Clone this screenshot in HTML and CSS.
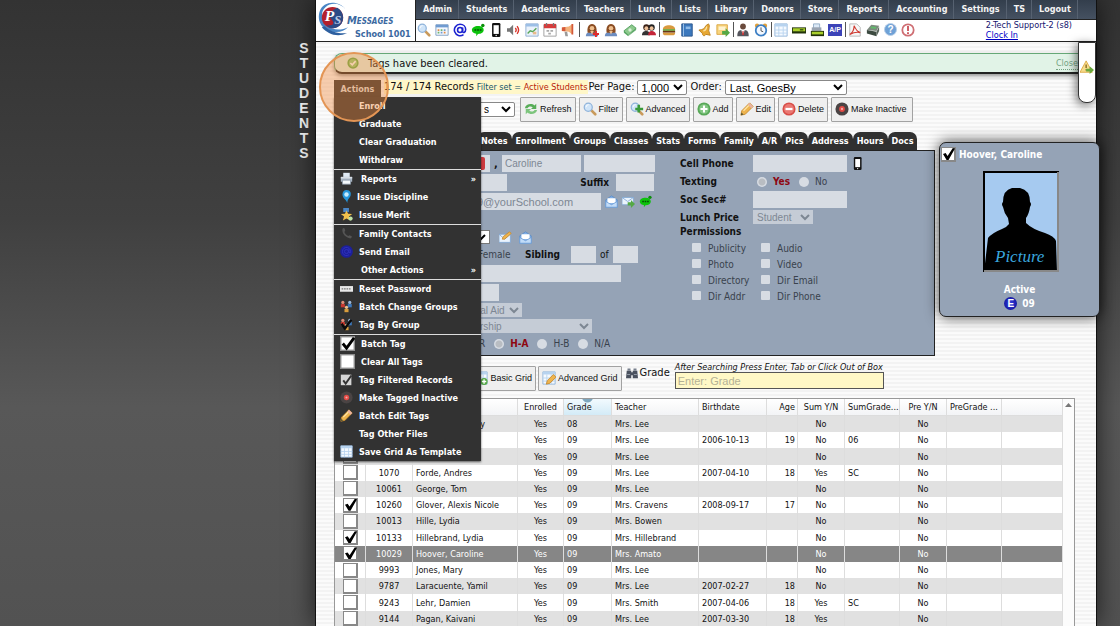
FILE: index.html
```html
<!DOCTYPE html>
<html lang="en">
<head>
<meta charset="utf-8">
<title>Messages - Students</title>
<link rel="stylesheet" href="styles.css">
</head>
<body>
<svg class="sprite" aria-hidden="true">
  <symbol id="i-search" viewBox="0 0 16 16"><path d="M9 9l5 5" stroke="#c99a5b" stroke-width="3" stroke-linecap="round"/><circle cx="6" cy="6" r="4.6" fill="#cfe4f8" stroke="#8fb3da" stroke-width="1.4"/><path d="M3.5 6a3 3 0 0 1 3-3" stroke="#fff" fill="none"/></symbol>
  <symbol id="i-calendar" viewBox="0 0 16 16"><path d="M1 2h14v12H1z" fill="#f4f8fd" stroke="#7e9cc0"/><path d="M1 2h14v3H1z" fill="#6f9bd1"/><path d="M3 7h2v2H3zM10 10h2v2h-2z" fill="#e08a4a"/><path d="M6.500 7h2v2h-2zM3 10h2v2H3z" fill="#6db46d"/><path d="M10 7h2v2h-2zM6.500 10h2v2h-2z" fill="#6f9bd1"/></symbol>
  <symbol id="i-at" viewBox="0 0 16 16"><circle cx="8" cy="8" r="2.800" fill="none" stroke="#1b22d0" stroke-width="1.800"/><path d="M11 5v4.500c0 2.500 3.500 1.500 3.500-2C14.500 4 11.800 1.500 8 1.500A6.500 6.500 0 1 0 12 13.200" fill="none" stroke="#1b22d0" stroke-width="1.800"/></symbol>
  <symbol id="i-chat" viewBox="0 0 16 16"><path d="M8 3.500c4 0 6.500 1.800 6.500 4.500S12 12.500 8 12.500L6 15v-2.700C3 12 1 10.500 1 8s3-4.500 7-4.500z" fill="#0cc20c"/><circle cx="13.500" cy="2.800" r="2" fill="#0a8f0a"/><path d="M4 8h2M7 8h2M10 8h2" stroke="#064d06" stroke-width="1.600"/></symbol>
  <symbol id="i-phone" viewBox="0 0 16 16"><rect x="3.500" y="0" width="9.500" height="16" rx="1.500" fill="#111"/><path d="M5.200 2.500h6v10h-6z" fill="#fff"/><circle cx="8.200" cy="14.200" r=".8" fill="#fff"/></symbol>
  <symbol id="i-sound" viewBox="0 0 16 16"><path d="M0 6h3l4-4v12l-4-4H0z" fill="#777"/><path d="M9.500 5.500q2 2.500 0 5M11.500 3.500q3.500 4.500 0 9" fill="none" stroke="#d8342a" stroke-width="1.600"/></symbol>
  <symbol id="i-chart" viewBox="0 0 16 16"><path d="M1 1h14v14H1z" fill="#eaf2fb" stroke="#8aa9cf"/><path d="M1 1h14v3H1z" fill="#9cbfe6"/><path d="M3 12l3-3 3 1 4-4" stroke="#57a657" stroke-width="1.600" fill="none"/><path d="M9 10h4v3H9z" fill="#e8b98b"/></symbol>
  <symbol id="i-date" viewBox="0 0 16 16"><path d="M1 2h14v13H1z" fill="#fff" stroke="#999"/><path d="M1 1h14v5H1z" fill="#d63c3c"/><path d="M4 0v3M12 0v3" stroke="#777" stroke-width="1.500"/><path d="M4 8h3v2H4zM8.500 8h3v2h-3zM6 11h3v2H6z" fill="#aaa"/></symbol>
  <symbol id="i-horn" viewBox="0 0 16 16"><path d="M1 5l8-1 4-3v12l-4-3-8-1z" fill="#f3b27c"/><path d="M1 5l4-.5v5L1 9zM12 1h2v12h-2z" fill="#d4593a"/><path d="M4 10l1 5h3l-1-5z" fill="#9a9a9a"/></symbol>
  <symbol id="i-person" viewBox="0 0 16 16"><path d="M1 15c0-4 3-5 7-5s7 1 7 5z" fill="#6d8dc0"/><path d="M3 11c-1-6 1-10 5-10s6 4 5 10z" fill="#8a4c22"/><circle cx="8" cy="6" r="2.600" fill="#efc08f"/><path d="M6 9h4l-2 4z" fill="#efc08f"/></symbol>
  <symbol id="i-person-add" viewBox="0 0 16 16"><use href="#i-person"/><path d="M12.500 9v7M9 12.500h7" stroke="#e02a2a" stroke-width="2.200"/></symbol>
  <symbol id="i-money" viewBox="0 0 16 16"><path d="M1 9l9-7 5 4-9 8z" fill="#8cc98c" stroke="#4e9a5a"/><path d="M1 9v2l5 4v-2zM6 15l9-7V6" fill="#5aa765"/><circle cx="8" cy="8" r="1.900" fill="#d8f0d8"/></symbol>
  <symbol id="i-group" viewBox="0 0 16 16"><circle cx="5" cy="5" r="3.600" fill="#3a2218"/><circle cx="11" cy="5" r="3.600" fill="#222"/><circle cx="5" cy="6" r="2.200" fill="#eec29b"/><circle cx="11" cy="6" r="2.200" fill="#eec29b"/><path d="M0 14c0-4 2-5 5-5s4 2 4 5z" fill="#333"/><path d="M7 14c0-4 2-5 4-5s5 1 5 5z" fill="#c42438"/></symbol>
  <symbol id="i-burger" viewBox="0 0 16 16"><path d="M1 7c0-6 14-6 14 0z" fill="#d99a3e"/><path d="M1 7h14v2H1z" fill="#6aa53b"/><path d="M1 9h14v2H1z" fill="#6a3515"/><path d="M1 11h14q0 3-3 3H4q-3 0-3-3z" fill="#d99a3e"/></symbol>
  <symbol id="i-book" viewBox="0 0 16 16"><path d="M2 1h12v14H2z" fill="#3b78bd" stroke="#2a558c"/><path d="M4 1v14" stroke="#a7c9ec"/><path d="M6.500 4h5.500v3H6.500z" fill="#8fbbe8"/></symbol>
  <symbol id="i-bell" viewBox="0 0 16 16"><path d="M1 8q6 0 8-5l3-2 1 2q-2 6 1 11l-5-1c-2 3-4 1-4-1z" fill="#e7a833" stroke="#b87b17"/><path d="M10 4q-1 5-4 5" fill="none" stroke="#fbe2a0" stroke-width="1.500"/></symbol>
  <symbol id="i-export" viewBox="0 0 16 16"><path d="M1 2h12v11H1z" fill="#f8d47e" stroke="#d9a43e"/><path d="M3 4h8v4H3z" fill="#fff3cf"/><path d="M7 9h4V6l5 5-5 5v-3H7z" fill="#55a845"/></symbol>
  <symbol id="i-staff" viewBox="0 0 16 16"><circle cx="8" cy="4" r="3.300" fill="#6a4a3c"/><path d="M1.500 15c0-6 2-7 6.500-7s6.500 1 6.500 7z" fill="#55555c"/><path d="M6 8h4l-2 6z" fill="#fff"/><path d="M7.500 9h1l.6 4L8 14l-1-1z" fill="#c22"/></symbol>
  <symbol id="i-clock" viewBox="0 0 16 16"><circle cx="3.500" cy="3" r="2.500" fill="#e0a03c"/><circle cx="12.500" cy="3" r="2.500" fill="#e0a03c"/><circle cx="8" cy="8.500" r="6" fill="#f3f8ff" stroke="#3c7fc4" stroke-width="2"/><path d="M8 5v4l2.500 1" fill="none" stroke="#444"/></symbol>
  <symbol id="i-sheet" viewBox="0 0 16 16"><path d="M1 1h14v14H1z" fill="#f5faff" stroke="#8fb2d9"/><path d="M1 1h14v3H1z" fill="#b7d3ef"/><path d="M5.500 4v11M10.500 4v11M1 8h14M1 11.500h14" stroke="#b7d3ef"/></symbol>
  <symbol id="i-cash" viewBox="0 0 16 16"><path d="M0 5h16v7H0z" fill="#22330b"/><path d="M1 6h14v3.500H1z" fill="#a9cf2c"/><path d="M9 7h4v1.500H9z" fill="#335010"/></symbol>
  <symbol id="i-cashprint" viewBox="0 0 16 16"><path d="M4 1h7v5H4z" fill="#dce9f6" stroke="#8fa9c4"/><path d="M2 5h11v4H2z" fill="#9aa4b1"/><path d="M1 9h15v6H1z" fill="#22330b"/><path d="M2 10h13v3H2z" fill="#a9cf2c"/></symbol>
  <symbol id="i-pdf" viewBox="0 0 16 16"><path d="M2 1h8l4 4v10H2z" fill="#f7f7f7" stroke="#b5b5b5"/><path d="M7 3c2 5 4 7 7 8-4-1-8 0-12 2 3-2 5-6 5-10z" fill="none" stroke="#cf3b32" stroke-width="1.300"/></symbol>
  <symbol id="i-register" viewBox="0 0 16 16"><path d="M1 8l5-6 9 1-3 6z" fill="#7e8a7f"/><path d="M1 8l11 2v5L1 12z" fill="#3c4a40"/><path d="M12 10l3-6v5l-3 6z" fill="#58655b"/><path d="M6 4l6 .7-1 2-6-.8z" fill="#5fbd6a"/></symbol>
  <symbol id="i-warn" viewBox="0 0 16 16"><circle cx="8" cy="8" r="6.500" fill="#fff" stroke="#cf6f74" stroke-width="2"/><path d="M8 3.500v5.500M8 10.500v2" stroke="#c8484f" stroke-width="2"/></symbol>
  <symbol id="i-ok" viewBox="0 0 16 16"><circle cx="8" cy="8" r="7.500" fill="#62b04a"/><circle cx="8" cy="8" r="5.500" fill="#91cf78"/><path d="M4.500 8l2.500 2.500 4.500-5" fill="none" stroke="#fff" stroke-width="2"/></symbol>
  <symbol id="i-refresh" viewBox="0 0 16 16"><path d="M1 7c1-5 8-6 11-3l2-2v6H8l2-2C8 4.500 5 5 4 7z" fill="#58ad58"/><path d="M15 9c-1 5-8 6-11 3l-2 2V8h6l-2 2c2 1.500 5 1 6-1z" fill="#7cc47c"/></symbol>
  <symbol id="i-advsearch" viewBox="0 0 16 16"><use href="#i-search"/><path d="M10 3v9M6 8h9" stroke="#3a9a3a" stroke-width="3"/></symbol>
  <symbol id="i-plus" viewBox="0 0 16 16"><circle cx="8" cy="8" r="7.500" fill="#58a858"/><circle cx="8" cy="8" r="5.500" fill="#83c783"/><path d="M8 4v8M4 8h8" stroke="#fff" stroke-width="2.400"/></symbol>
  <symbol id="i-pencil" viewBox="0 0 16 16"><path d="M1 15l1-5L11 1l4 4-9 9z" fill="#eeb44e" stroke="#c78a2e"/><path d="M11 1l4 4-2 2-4-4z" fill="#e9b3a3"/><path d="M1 15l.7-3L4 14.300z" fill="#553"/><path d="M4 10l6-6" stroke="#ffe5a6" stroke-width="1.500"/></symbol>
  <symbol id="i-minus" viewBox="0 0 16 16"><circle cx="8" cy="8" r="7.500" fill="#d84e48"/><circle cx="8" cy="8" r="5.800" fill="#ea7872"/><path d="M4 8h8" stroke="#fff" stroke-width="2.600"/></symbol>
  <symbol id="i-record" viewBox="0 0 16 16"><circle cx="8" cy="8" r="7.500" fill="#4a4444"/><circle cx="8" cy="8" r="3.300" fill="#e34b46"/><circle cx="8" cy="8" r="1.300" fill="#f7aaa6"/></symbol>
  <symbol id="i-mail" viewBox="0 0 16 16"><path d="M1 6l7-5 7 5v9H1z" fill="#7faee6" stroke="#5b8cc8"/><path d="M3 4h10v6H3z" fill="#fff"/><path d="M1 8l7 4 7-4v7H1z" fill="#c2dcf8" stroke="#6f9fd8"/></symbol>
  <symbol id="i-mailgo" viewBox="0 0 16 16"><path d="M0 3h14v9H0z" fill="#eaf3fd" stroke="#7fa6d4"/><path d="M0 3l7 5 7-5" fill="none" stroke="#7fa6d4"/><path d="M7 9h4V6l5 5-5 5v-3H7z" fill="#55a845"/></symbol>
  <symbol id="i-mailedit" viewBox="0 0 16 16"><path d="M0 4h14v10H0z" fill="#eaf3fd" stroke="#7fa6d4"/><path d="M0 4l7 6 7-6" fill="none" stroke="#7fa6d4"/><path d="M4 10l1-3 8-6 2 2-8 7z" fill="#eeb44e" stroke="#c78a2e"/></symbol>
  <symbol id="i-printer" viewBox="0 0 16 16"><path d="M4 1h8v6H4z" fill="#dfeaf5"/><path d="M1 6h14v6H1z" fill="#aab7c6"/><path d="M1 6h14v2H1z" fill="#d7dee6"/><path d="M3 10h10v5H3z" fill="#f5f9fd" stroke="#8b99a8"/></symbol>
  <symbol id="i-pin" viewBox="0 0 16 16"><path d="M8 0c5 0 6 4 5 7-1 3-4 4-4 9C8 12 3 10 3 5.500 3 2.500 5 0 8 0z" fill="#2596dc"/><circle cx="8" cy="5.500" r="2.700" fill="#c6ecff"/></symbol>
  <symbol id="i-star" viewBox="0 0 16 16"><path d="M4 0h7v5H4z" fill="#4a86c5"/><path d="M8 3l2 4 5 .5-4 3 1.500 5L8 13l-4.500 2.500 1.500-5-4-3L6 7z" fill="#f0c04c"/><circle cx="13" cy="13" r="2.600" fill="#bfe3a6"/></symbol>
  <symbol id="i-handset" viewBox="0 0 16 16"><path d="M3 2c-1 6 4 11 10 12l2-2-3-2-2 1C8 10 6 8 5.500 6L6.500 4 5 1z" fill="#555"/></symbol>
  <symbol id="i-atdark" viewBox="0 0 16 16"><circle cx="8" cy="8" r="7.800" fill="#1d1f9c"/><circle cx="8" cy="8" r="2.500" fill="none" stroke="#3135c0"/><path d="M11 5v4q2 2 2-1a5 5 0 1 0-2 4" fill="none" stroke="#3135c0"/></symbol>
  <symbol id="i-password" viewBox="0 0 16 16"><path d="M0 5h16v7H0z" fill="#e8e8e8"/><path d="M2 8.500h12" stroke="#777" stroke-width="1.500" stroke-dasharray="2 1"/></symbol>
  <symbol id="i-groups" viewBox="0 0 16 16"><circle cx="3.500" cy="3" r="2" fill="#e08f78"/><path d="M1 5h5v4H1z" fill="#c9382f"/><circle cx="12" cy="3" r="2" fill="#9bb7d8"/><path d="M9.500 5h5v4h-5z" fill="#3c79bd"/><circle cx="8" cy="9" r="2" fill="#efc08f"/><path d="M5.500 11h5v4h-5z" fill="#d99d3c"/></symbol>
  <symbol id="i-grouptag" viewBox="0 0 16 16"><use href="#i-groups"/><path d="M2 7l4 6L14 2" fill="none" stroke="#0a0a0a" stroke-width="3"/></symbol>
  <symbol id="i-checked" viewBox="0 0 16 16"><path d="M0 0h16v16H0z" fill="#8d8d8d"/><path d="M1.500 1.500h13v13h-13z" fill="#fff"/><path d="M3 8l4 5L15 2" fill="none" stroke="#000" stroke-width="3"/></symbol>
  <symbol id="i-unchecked" viewBox="0 0 16 16"><path d="M0 0h16v16H0z" fill="#8d8d8d"/><path d="M1.500 1.500h13v13h-13z" fill="#fff"/></symbol>
  <symbol id="i-filtered" viewBox="0 0 16 16"><path d="M1 2h13v13H1z" fill="#d6d6d6"/><path d="M4 9l3 4 7-10" fill="none" stroke="#333" stroke-width="2.400"/></symbol>
  <symbol id="i-gridadd" viewBox="0 0 16 16"><use href="#i-sheet"/><circle cx="11.500" cy="12" r="4" fill="#55a845"/><path d="M11.500 9.500v5M9 12h5" stroke="#fff" stroke-width="1.500"/></symbol>
  <symbol id="i-gridedit" viewBox="0 0 16 16"><use href="#i-sheet"/><path d="M5 15l1-4 7-7 3 3-7 7z" fill="#eeb44e" stroke="#c78a2e"/></symbol>
  <symbol id="i-binoc" viewBox="0 0 16 16"><path d="M1 5h6v2h2V5h6l1 10H9v-4H7v4H0z" fill="#4a515e"/><path d="M2 2h4v3H2zM10 2h4v3h-4z" fill="#777f8c"/><path d="M1.500 10h4M10.500 10h4" stroke="#a9b1bd"/></symbol>
  <symbol id="i-alertgo" viewBox="0 0 16 16"><path d="M7 1l7 13H0z" fill="#f6dc8c" stroke="#dba63c"/><path d="M7 5v4M7 10.500v1.500" stroke="#7a5b13" stroke-width="1.400"/><path d="M7 10h4V7l5 4.500-5 4.500v-3H7z" fill="#6aa83c"/></symbol>
</svg>

<div class="shell">
  <aside class="rail"><h1 class="rail-title">STUDENTS</h1></aside>
  <div class="main">
    <header class="top">
      <a class="logo" href="#" aria-label="Messages School 1001">
        <svg class="logo-mark" viewBox="0 0 34 40" aria-hidden="true">
          <path d="M31 10C24 0 8 0 4 11s3 22 17 22c5 0 9-2 12-5-8 4-17 3-22-3S4 12 10 7s15-4 21 3z" fill="#4a86c5"/>
          <path d="M6 28c6 7 16 11 26 6-9 1-17-1-23-7z" fill="#2d5f9f"/>
          <circle cx="17" cy="18" r="11" fill="#b3202c"/>
          <path d="M22 8c8 5 8 16 0 20-4 2-9 1-11-2 8 1 8-3 5-6s-2-9 6-12z" fill="#2b4a86"/>
          <text x="9" y="22" class="mark-p">P<tspan class="mark-s" dy="3">S</tspan></text>
        </svg>
        <span class="logo-text"><span class="logo-name">Messages</span><span class="logo-school">School 1001</span></span>
      </a>
      <div class="top-right">
        <nav class="nav">
          <a href="#">Admin</a><a href="#">Students</a><a href="#">Academics</a><a href="#">Teachers</a><a href="#">Lunch</a><a href="#">Lists</a><a href="#">Library</a><a href="#">Donors</a><a href="#">Store</a><a href="#">Reports</a><a href="#">Accounting</a><a href="#">Settings</a><a href="#">TS</a><a href="#">Logout</a>
        </nav>
        <div class="toolbar">
          <div class="tools">
            <svg><use href="#i-search"/></svg><svg><use href="#i-calendar"/></svg><svg><use href="#i-at"/></svg><svg><use href="#i-chat"/></svg><svg><use href="#i-phone"/></svg><svg><use href="#i-sound"/></svg><svg><use href="#i-chart"/></svg><svg><use href="#i-date"/></svg><svg><use href="#i-horn"/></svg>
          </div>
          <div class="tools wide">
            <svg><use href="#i-person-add"/></svg><svg><use href="#i-person"/></svg><svg><use href="#i-money"/></svg><svg><use href="#i-group"/></svg>
          </div>
          <div class="tools">
            <svg><use href="#i-burger"/></svg><svg><use href="#i-book"/></svg><svg><use href="#i-bell"/></svg><svg><use href="#i-export"/></svg>
          </div>
          <div class="tools">
            <svg><use href="#i-staff"/></svg><svg><use href="#i-clock"/></svg>
          </div>
          <div class="tools">
            <svg><use href="#i-sheet"/></svg><svg><use href="#i-cash"/></svg><svg><use href="#i-cashprint"/></svg><span class="ap">A/P</span>
          </div>
          <div class="tools">
            <svg><use href="#i-pdf"/></svg><svg><use href="#i-register"/></svg><span class="help">?</span><svg><use href="#i-warn"/></svg>
          </div>
          <div class="user"><span>2-Tech Support-2 (s8)</span><a href="#">Clock In</a></div>
        </div>
      </div>
    </header>

    <div class="content">
      <div class="alert" role="status"><svg><use href="#i-ok"/></svg><span>Tags have been cleared.</span><a href="#">Close</a></div>

      <div class="records">
        <div class="actions">
          <button class="actions-tab" type="button">Actions</button>
          <div class="menu">
            <div class="menu-group">
              <a href="#"><i></i>Enroll</a><a href="#"><i></i>Graduate</a><a href="#"><i></i>Clear Graduation</a><a href="#"><i></i>Withdraw</a>
            </div>
            <div class="menu-group">
              <a href="#"><svg><use href="#i-printer"/></svg><span class="inset">Reports</span><b>»</b></a><a href="#" class="near"><svg><use href="#i-pin"/></svg>Issue Discipline</a><a href="#"><svg><use href="#i-star"/></svg>Issue Merit</a>
            </div>
            <div class="menu-group">
              <a href="#"><svg><use href="#i-handset"/></svg>Family Contacts</a><a href="#"><svg><use href="#i-atdark"/></svg>Send Email</a><a href="#"><i></i><span class="inset">Other Actions</span><b>»</b></a>
            </div>
            <div class="menu-group">
              <a href="#"><svg><use href="#i-password"/></svg>Reset Password</a><a href="#"><svg><use href="#i-groups"/></svg>Batch Change Groups</a><a href="#"><svg><use href="#i-grouptag"/></svg>Tag By Group</a>
            </div>
            <div class="menu-group">
              <a href="#"><svg class="big"><use href="#i-checked"/></svg><span class="inset">Batch Tag</span></a><a href="#"><svg class="big"><use href="#i-unchecked"/></svg><span class="inset">Clear All Tags</span></a><a href="#"><svg><use href="#i-filtered"/></svg>Tag Filtered Records</a><a href="#"><svg><use href="#i-record"/></svg>Make Tagged Inactive</a><a href="#"><svg><use href="#i-pencil"/></svg>Batch Edit Tags</a><a href="#"><i></i>Tag Other Files</a><a href="#"><svg><use href="#i-sheet"/></svg>Save Grid As Template</a>
            </div>
          </div>
          <span class="spot"></span>
        </div>
        <div class="summary"><span class="count">174 / 174 Records</span><span class="filter">Filter set = <em>Active Students</em></span></div>
        <label for="per">Per Page:</label>
        <select id="per" class="sel-per"><option>1,000</option></select>
        <label for="order">Order:</label>
        <select id="order" class="sel-order"><option>Last, GoesBy</option></select>
      </div>

      <div class="commands">
        <select class="sel-view" aria-label="View"><option>s</option></select>
        <button type="button"><svg><use href="#i-refresh"/></svg>Refresh</button>
        <button type="button"><svg><use href="#i-search"/></svg>Filter</button>
        <button type="button"><svg><use href="#i-advsearch"/></svg>Advanced</button>
        <button type="button"><svg><use href="#i-plus"/></svg>Add</button>
        <button type="button"><svg><use href="#i-pencil"/></svg>Edit</button>
        <button type="button"><svg><use href="#i-minus"/></svg>Delete</button>
        <button type="button"><svg><use href="#i-record"/></svg>Make Inactive</button>
      </div>

      <div class="tabs">
        <a href="#">Notes</a><a href="#">Enrollment</a><a href="#">Groups</a><a href="#">Classes</a><a href="#">Stats</a><a href="#">Forms</a><a href="#">Family</a><a href="#">A/R</a><a href="#">Pics</a><a href="#">Address</a><a href="#">Hours</a><a href="#">Docs</a>
      </div>

      <div class="details">
        <form class="panel">
          <div class="fields">
            <div class="row"><span class="name"><input class="w-last" aria-label="Last name" disabled><i class="flag"></i></span><span class="comma">,</span><input class="w-first" aria-label="First name" value="Caroline" disabled><input class="w-mid" aria-label="Middle name" disabled></div>
            <div class="row"><input class="w-nick" aria-label="Goes by" disabled><label class="push" for="suffix">Suffix</label><input id="suffix" class="w-38" disabled></div>
            <div class="row"><input class="w-mail" aria-label="Email" value="9@yourSchool.com" disabled><svg class="gap-l"><use href="#i-mail"/></svg><svg><use href="#i-mailgo"/></svg><svg><use href="#i-chat"/></svg></div>
            <div class="row late"><select class="w-pick" aria-label="Contact"><option></option></select><svg class="gap-m"><use href="#i-mailedit"/></svg><svg><use href="#i-mail"/></svg></div>
            <div class="row sib"><span class="dim female">Female</span><label for="sib">Sibling</label><input id="sib" class="w-25" disabled><span class="of">of</span><input class="w-25" aria-label="Sibling count" disabled></div>
            <div class="row"><input class="w-long" aria-label="Ethnicity" disabled></div>
            <div class="row"><input class="w-short" aria-label="Code" disabled></div>
            <div class="row low"><select class="w-aid" aria-label="Aid" disabled><option>ial Aid</option></select></div>
            <div class="row low"><select class="w-ship" aria-label="Scholarship" disabled><option>rship</option></select></div>
            <div class="row radios"><span class="dim">R</span><input type="radio" name="hr" id="ha" checked disabled><label class="hot" for="ha">H-A</label><input type="radio" name="hr" id="hb" disabled><label class="dim" for="hb">H-B</label><input type="radio" name="hr" id="hn" disabled><label class="dim" for="hn">N/A</label></div>
          </div>
          <div class="contact">
            <div class="row"><label class="lab" for="cell">Cell Phone</label><input id="cell" class="w-94" disabled><svg class="gap-p"><use href="#i-phone"/></svg></div>
            <div class="row texting"><span class="lab">Texting</span><input type="radio" name="tx" id="ty" checked disabled><label class="hot" for="ty">Yes</label><input type="radio" name="tx" id="tn" disabled><label class="dim" for="tn">No</label></div>
            <div class="row"><label class="lab" for="ssn">Soc Sec#</label><input id="ssn" class="w-94" disabled></div>
            <div class="row low"><label class="lab" for="lunch">Lunch Price</label><select id="lunch" class="w-60" disabled><option>Student</option></select></div>
            <span class="lab">Permissions</span>
            <div class="perms">
              <label><input type="checkbox" disabled>Publicity</label><label><input type="checkbox" disabled>Audio</label>
              <label><input type="checkbox" disabled>Photo</label><label><input type="checkbox" disabled>Video</label>
              <label><input type="checkbox" disabled>Directory</label><label><input type="checkbox" disabled>Dir Email</label>
              <label><input type="checkbox" disabled>Dir Addr</label><label><input type="checkbox" disabled>Dir Phone</label>
            </div>
          </div>
        </form>
      </div>

      <div class="gridbar">
        <button type="button" class="basic"><svg><use href="#i-gridadd"/></svg>Basic Grid</button>
        <button type="button"><svg><use href="#i-gridedit"/></svg>Advanced Grid</button>
        <label class="find" for="grade"><svg><use href="#i-binoc"/></svg>Grade</label>
        <div class="finder"><em>After Searching Press Enter, Tab or Click Out of Box</em><input id="grade" placeholder="Enter: Grade"></div>
      </div>

      <div class="grid">
        <table>
          <colgroup><col class="c31"><col class="c47"><col class="c105"><col class="c46"><col class="c48"><col class="c87"><col class="c68"><col class="c31"><col class="c47"><col class="c55"><col class="c47"><col class="c55"><col></colgroup>
          <thead><tr><th></th><th></th><th></th><th class="c">Enrolled</th><th class="sorted">Grade</th><th>Teacher</th><th>Birthdate</th><th class="r">Age</th><th class="c">Sum Y/N</th><th>SumGrade...</th><th class="c">Pre Y/N</th><th>PreGrade ...</th><th></th></tr></thead>
          <tbody>
            <tr><td><input type="checkbox" aria-label="Tag"></td><td class="c"></td><td class="tail">y</td><td class="c">Yes</td><td>08</td><td>Mrs. Lee</td><td></td><td class="r"></td><td class="c">No</td><td></td><td class="c">No</td><td></td><td></td></tr>
            <tr><td><input type="checkbox" aria-label="Tag"></td><td class="c"></td><td></td><td class="c">Yes</td><td>09</td><td>Mrs. Lee</td><td>2006-10-13</td><td class="r">19</td><td class="c">No</td><td>06</td><td class="c">No</td><td></td><td></td></tr>
            <tr><td><input type="checkbox" aria-label="Tag"></td><td class="c"></td><td></td><td class="c">Yes</td><td>09</td><td>Mrs. Lee</td><td></td><td class="r"></td><td class="c">No</td><td></td><td class="c">No</td><td></td><td></td></tr>
            <tr><td><input type="checkbox" aria-label="Tag"></td><td class="c">1070</td><td>Forde, Andres</td><td class="c">Yes</td><td>09</td><td>Mrs. Lee</td><td>2007-04-10</td><td class="r">18</td><td class="c">Yes</td><td>SC</td><td class="c">No</td><td></td><td></td></tr>
            <tr><td><input type="checkbox" aria-label="Tag"></td><td class="c">10061</td><td>George, Tom</td><td class="c">Yes</td><td>09</td><td>Mrs. Lee</td><td></td><td class="r"></td><td class="c">No</td><td></td><td class="c">No</td><td></td><td></td></tr>
            <tr><td><input type="checkbox" aria-label="Tag" checked></td><td class="c">10260</td><td>Glover, Alexis Nicole</td><td class="c">Yes</td><td>09</td><td>Mrs. Cravens</td><td>2008-09-17</td><td class="r">17</td><td class="c">No</td><td></td><td class="c">No</td><td></td><td></td></tr>
            <tr><td><input type="checkbox" aria-label="Tag"></td><td class="c">10013</td><td>Hille, Lydia</td><td class="c">Yes</td><td>09</td><td>Mrs. Bowen</td><td></td><td class="r"></td><td class="c">No</td><td></td><td class="c">No</td><td></td><td></td></tr>
            <tr><td><input type="checkbox" aria-label="Tag" checked></td><td class="c">10133</td><td>Hillebrand, Lydia</td><td class="c">Yes</td><td>09</td><td>Mrs. Hillebrand</td><td></td><td class="r"></td><td class="c">No</td><td></td><td class="c">No</td><td></td><td></td></tr>
            <tr class="current"><td><input type="checkbox" aria-label="Tag" checked></td><td class="c">10029</td><td>Hoover, Caroline</td><td class="c">Yes</td><td>09</td><td>Mrs. Amato</td><td></td><td class="r"></td><td class="c">No</td><td></td><td class="c">No</td><td></td><td></td></tr>
            <tr><td><input type="checkbox" aria-label="Tag"></td><td class="c">9993</td><td>Jones, Mary</td><td class="c">Yes</td><td>09</td><td>Mrs. Lee</td><td></td><td class="r"></td><td class="c">No</td><td></td><td class="c">No</td><td></td><td></td></tr>
            <tr><td><input type="checkbox" aria-label="Tag"></td><td class="c">9787</td><td>Laracuente, Yamil</td><td class="c">Yes</td><td>09</td><td>Mrs. Lee</td><td>2007-02-27</td><td class="r">18</td><td class="c">No</td><td></td><td class="c">No</td><td></td><td></td></tr>
            <tr><td><input type="checkbox" aria-label="Tag"></td><td class="c">9243</td><td>Lehr, Damien</td><td class="c">Yes</td><td>09</td><td>Mrs. Smith</td><td>2007-04-06</td><td class="r">18</td><td class="c">Yes</td><td>SC</td><td class="c">No</td><td></td><td></td></tr>
            <tr><td><input type="checkbox" aria-label="Tag"></td><td class="c">9144</td><td>Pagan, Kaivani</td><td class="c">Yes</td><td>09</td><td>Mrs. Lee</td><td>2007-03-30</td><td class="r">18</td><td class="c">Yes</td><td></td><td class="c">No</td><td></td><td></td></tr>
          </tbody>
        </table>
        <div class="scroll"><span class="arrow"></span></div>
      </div>
    </div>

    <button class="drawer" type="button" aria-label="Alerts"><svg><use href="#i-alertgo"/></svg></button>

    <section class="card">
      <label class="card-head"><input type="checkbox" checked>Hoover, Caroline</label>
      <svg class="photo" viewBox="0 0 76 101" role="img" aria-label="Picture">
        <path d="M0 0h76v101H0z" fill="#a6caf0"/>
        <path d="M1 101L5 67q4-5 14-9 5-2 7-5l-1-6q-4-5-5-11-2-3 0-5 0-12 9-14h8q10 2 10 14 2 2 0 5-1 7-4 11v5q6 6 19 10 9 3 11 8l1 31z" fill="#000"/>
        <text x="12" y="91" class="photo-text">Picture</text>
        <path d="M0 101V0h76" fill="none" stroke="#000" stroke-width="4"/>
        <path d="M75 1v99H1" fill="none" stroke="#888" stroke-width="2"/>
      </svg>
      <span>Active</span>
      <span class="enrolled"><i>E</i>09</span>
    </section>
  </div>
</div>
</body>
</html>
```
FILE: styles.css
```css
* { box-sizing: border-box; }
body {
  margin: 0;
  height: 100vh;
  overflow: hidden;
  font-family: "DejaVu Sans Condensed", "Noto Sans", sans-serif;
  font-size: 9px;
  color: #111;
  background: linear-gradient(#333, #404040 35%, #585858 65%, #525252);
}
a { color: inherit; text-decoration: none; }
button, input, select { font-family: "Liberation Sans", Arial, sans-serif; margin: 0; }
.sprite { position: absolute; width: 0; height: 0; }
svg { flex: none; }

.shell { display: flex; height: 100%; }
.rail { flex: 0 0 315px; display: flex; justify-content: flex-end; }
.rail-title {
  margin: 41px 4px 0 0;
  width: 14px;
  font: bold 14px/15px "Liberation Sans", Arial, sans-serif;
  text-align: center;
  color: #fff;
  word-break: break-all;
}
.main {
  position: relative;
  flex: 1;
  min-width: 0;
  margin-right: 23px;
  border: solid #111;
  border-width: 0 1px;
  background: repeating-linear-gradient(#fbfbfb 0 2px, #f3f3f3 2px 4px);
  box-shadow: 0 0 24px #000a;
}

.top { display: flex; height: 42px; border-bottom: 1px solid #222; background: #fff; }
.logo { display: flex; flex: 0 0 100px; border-right: 1px solid #222; }
.logo-mark { width: 33px; height: 39px; }
.mark-p { font: italic bold 16px "Liberation Serif", serif; fill: #fff; }
.mark-s { font-size: 13px; fill: #b9cbe6; }
.logo-text { display: flex; flex-direction: column; margin: 14px 0 0 -2px; font-weight: bold; color: #3a689f; }
.logo-name { font-size: 11px; line-height: 14px; font-style: italic; font-variant: small-caps; }
.logo-school { padding-left: 8px; font-size: 9px; line-height: 12px; white-space: nowrap; }
.top-right { flex: 1; min-width: 0; }
.nav { display: flex; height: 20px; background: linear-gradient(#333e4c, #455161); border-bottom: 1px solid #222; }
.nav a {
  padding: 0 6px 0 7px;
  border-right: 1px solid #566170;
  font-weight: bold;
  line-height: 19px;
  color: #f4f4f4;
  white-space: nowrap;
}
.toolbar { display: flex; align-items: center; height: 19px; padding-left: 1px; }
.tools { display: flex; gap: 4px; align-items: center; }
.tools svg { width: 14px; height: 14px; }
.tools + .tools { border-left: 1px solid #555; margin-left: 3px; padding-left: 2px; height: 15px; }
.tools + .wide { gap: 5px; margin-left: 4px; padding-left: 5px; }
.ap, .help {
  width: 14px;
  height: 12px;
  background: #3c43b8;
  font: bold 7px/12px "Liberation Sans", Arial, sans-serif;
  text-align: center;
  color: #fff;
}
.help { width: 13px; height: 13px; border: 1px solid #b8cfe8; border-radius: 50%; background: #6fa1d6; font-size: 10px; line-height: 11px; }
.user { display: flex; flex-direction: column; margin: 0 24px 0 auto; line-height: 10px; color: #14146e; }
.user a { color: #0000c8; text-decoration: underline; }

.content { padding: 11px 21px 0 18px; }
.alert {
  display: flex;
  align-items: center;
  height: 21px;
  margin-right: -5px;
  padding: 0 2px 0 12px;
  border: 1px solid #66a877;
  border-right: 0;
  border-bottom: 2px solid #222;
  border-radius: 8px 0 0 8px;
  background: #e1f3e7;
  box-shadow: 0 2px 4px #0006;
  font-size: 11px;
}
.alert svg { width: 12px; height: 12px; margin-right: 9px; }
.alert a { margin-left: auto; font-size: 9px; color: #75a583; border-bottom: 1px dotted #75a583; line-height: 12px; }

.records { display: flex; align-items: flex-start; height: 17px; margin-top: 6px; font-size: 11px; line-height: 14px; white-space: nowrap; }
.actions { position: relative; width: 47px; margin-right: 3px; }
.actions-tab {
  display: block;
  width: 100%;
  height: 17px;
  padding: 0;
  border: 0;
  background: #323232;
  font: bold 9px "DejaVu Sans Condensed", sans-serif;
  color: #ddd;
}
.menu {
  position: absolute;
  z-index: 5;
  top: 17px;
  left: 0;
  width: 147px;
  background: #323232;
  box-shadow: 0 1px 2px #0009;
}
.menu-group + .menu-group { border-top: 1px solid #ddd; }
.menu a { display: flex; align-items: center; height: 18px; padding: 0 5px 1px 6px; font-size: 9px; font-weight: bold; color: #fff; }
.menu i { width: 19px; }
.menu svg { width: 13px; height: 13px; margin-right: 6px; }
.menu .near svg { margin-right: 4px; }
.menu .big { width: 15px; height: 15px; margin-right: 4px; }
.menu .inset { padding-left: 2px; }
.menu b { margin-left: auto; }
.spot {
  position: absolute;
  z-index: 6;
  left: -15px;
  top: -28px;
  width: 70px;
  height: 70px;
  border: 2px solid #e39555;
  border-radius: 50%;
  background: #f0883a66;
}
.summary { display: flex; height: 14px; background: #fff7c8; }
.filter { margin: 0 1px 0 3px; font-size: 9px; color: #14566b; }
.filter em { font-style: normal; color: #b8230a; }
.sel-per { width: 50px; height: 15px; margin: 0 4px 0 2px; }
.sel-order { width: 122px; height: 15px; margin-left: 3px; }
.records select { font-size: 11px; border: 1px solid #888; border-radius: 2px; background: #fff; padding: 0; }

.commands { display: flex; align-items: center; gap: 3px; }
.sel-view {
  width: 181px;
  height: 15px;
  margin-right: 2px;
  padding: 0 9px 0 0;
  border: 1px solid #888;
  border-radius: 2px;
  background: #fff;
  font-size: 10px;
  text-align: right;
}
.commands button, .gridbar button {
  display: flex;
  align-items: center;
  height: 25px;
  padding: 0 3px 1px;
  border: 1px solid #a2a2a2;
  border-radius: 1px;
  background: #efefef;
  font-size: 9px;
  color: #111;
  white-space: nowrap;
}
.commands button:last-child { padding-right: 5px; }
.commands svg, .gridbar svg { width: 14px; height: 14px; margin-right: 2px; }

.tabs { display: flex; height: 18px; margin-top: 10px; padding-left: 143px; }
.tabs a {
  padding: 0 4px;
  border-radius: 7px 7px 0 0;
  background: #303030;
  font-size: 9px;
  font-weight: bold;
  line-height: 18px;
  color: #fff;
}

.details { padding-right: 140px; }
.panel {
  display: flex;
  height: 206px;
  padding: 4px 0 0;
  border: 1px solid #222;
  background: #95a3b6;
  font-size: 11px;
}
.fields { display: flex; flex-direction: column; gap: 2px; width: 345px; }
.row { display: flex; align-items: center; height: 17px; white-space: nowrap; }
.row input:not([type]), .panel select:disabled {
  height: 17px;
  padding: 0 3px;
  border: 0;
  background: #d7dce3;
  font-size: 10px;
  color: #7d8793;
}
.panel select:disabled { height: 14px; padding: 0; background: #c5ccd6; opacity: 1; }
.panel svg { width: 13px; height: 13px; margin-right: 4px; }
.panel label { font-weight: bold; font-size: 10px; }
.panel .dim, .perms label { font-weight: normal; font-size: 10px; color: #39424d; }
.panel .hot { font-size: 10px; color: #8e0711; }
.name { display: flex; align-items: center; width: 155px; background: #d7dce3; }
.row .w-last { width: 145px; }
.flag { width: 5px; height: 13px; background: #cc3a3f; border-radius: 0 2px 2px 0; }
.comma { width: 12px; text-align: center; font-weight: bold; }
.row .w-first { width: 79px; margin-right: 3px; }
.row .w-mid { width: 71px; }
.row .w-nick { width: 172px; }
.push { width: 102px; text-align: right; margin-right: 7px; }
.row .w-38 { width: 38px; }
.row input.w-mail:not([type]) { width: 266px; padding-left: 142px; font-size: 11px; }
.panel .gap-l { margin-left: 4px; }
.late { height: 32px; align-items: flex-end; }
.w-pick { width: 155px; height: 14px; border: 1px solid #777; background: #fff; }
.panel .gap-m { margin-left: 9px; margin-right: 7px; }
.female { width: 190px; padding-left: 143px; }
.row .w-25 { width: 25px; margin-left: 11px; }
.of { padding-left: 4px; font-size: 10px; }
.sib .of + .w-25 { margin-left: 4px; }
.row .w-long { width: 286px; }
.row .w-short { width: 164px; }
.row.low { height: 14px; }
.panel select.w-aid { width: 187px; padding-left: 139px; }
.panel select.w-ship { width: 257px; padding-left: 141px; }
.radios { padding-left: 144px; }
.panel [type=radio] {
  appearance: none;
  width: 10px;
  height: 10px;
  margin: 0 6px 0 9px;
  border-radius: 50%;
  background: #d7dce3;
}
.panel [type=radio]:checked { background: radial-gradient(#b9bdc2 3px, #d7dce3 4px); }
.contact { display: flex; flex-direction: column; gap: 2px; }
.row.texting { height: 15px; }
.lab { width: 73px; font-weight: bold; font-size: 10px; }
.row .w-94 { width: 94px; }
.panel .gap-p { margin-left: 4px; }
.row .w-60 { width: 60px; }
.texting .lab + [type=radio] { margin-left: 4px; }
.perms { display: grid; grid-template-columns: 69px 69px; margin-top: 2px; padding-left: 12px; row-gap: 1px; }
.perms label { display: flex; align-items: center; height: 15px; white-space: nowrap; }
.perms input { appearance: none; width: 9px; height: 9px; margin: 0 7px 2px 0; background: #d7dce3; border-radius: 1px; }

.gridbar { display: flex; align-items: flex-start; gap: 2px; padding-top: 6px; height: 42px; }
.gridbar button { margin-top: 4px; }
.gridbar .basic { width: 202px; justify-content: flex-end; }
.find { display: flex; align-items: center; margin: 4px 3px 0 2px; font-size: 11px; }
.gridbar .find svg { width: 12px; height: 12px; }
.finder { display: flex; flex-direction: column; width: 209px; }
.finder em { font-size: 9px; line-height: 10px; white-space: nowrap; }
.finder input { height: 17px; padding: 0 2px; border: 1px solid #555; background: #fff8c6; font-size: 11px; }
.finder input::placeholder { color: #b4b195; }

.grid { display: flex; border: 1px solid #999; background: #fff; }
table { flex: 1; width: 100%; height: 228px; table-layout: fixed; border-collapse: separate; border-spacing: 0; }
.c31 { width: 31px; } .c46 { width: 46px; } .c47 { width: 47px; } .c48 { width: 48px; } .c55 { width: 55px; }
.c68 { width: 68px; } .c87 { width: 87px; } .c105 { width: 105px; }
th, td { padding: 0 0 0 3px; border-right: 1px solid #ddd; text-align: left; font-weight: normal; line-height: 12px; white-space: nowrap; }
th { height: 17px; border-bottom: 1px solid #ddd; background: linear-gradient(#fff, #f3f4f6); }
.c { padding: 0; text-align: center; }
.r { padding: 0 2px 0 0; text-align: right; }
.tail { padding: 0; text-align: right; padding-right: 32px; }
.sorted { background: radial-gradient(circle at 50% -2px, #7ea6bd 5px, transparent 6px), linear-gradient(#f2fafe, #d3ebf7); }
tbody tr:nth-child(odd) { background: #e1e1e1; }
tbody tr.current { background: #868686; color: #fff; }
.grid input, .card input {
  position: relative;
  appearance: none;
  display: block;
  width: 15px;
  height: 15px;
  margin-left: 5px;
  border: 1px solid #888;
  border-width: 1px 2px 2px 1px;
  background: #fff;
}
.grid input:checked::after, .card input:checked::after {
  content: "";
  position: absolute;
  inset: 0 -1px 0 1px;
  background: #000;
  clip-path: polygon(0 50%, 22% 42%, 38% 66%, 82% 0, 100% 4%, 46% 100%, 30% 100%);
}
.scroll { flex: 0 0 11px; padding: 4px 0 0 2px; background: #fcfcfc; }
.arrow { display: block; width: 7px; height: 4px; background: #777; clip-path: polygon(50% 0, 100% 100%, 0 100%); }

.drawer {
  position: absolute;
  top: 42px;
  right: 0;
  width: 18px;
  height: 61px;
  padding: 0 1px 12px;
  border: 1px solid #333;
  border-radius: 0 0 8px 8px;
  background: #fff;
  box-shadow: -2px 2px 10px #0008;
}
.drawer svg { display: block; width: 14px; height: 14px; }
.card {
  position: absolute;
  top: 142px;
  right: -4px;
  display: flex;
  flex-direction: column;
  align-items: center;
  width: 161px;
  height: 175px;
  border: 1px solid #222;
  border-radius: 7px;
  background: #95a3b6;
  box-shadow: 0 0 14px #000b;
  font-size: 10px;
  font-weight: bold;
  color: #fff;
}
.card-head { display: flex; align-items: center; gap: 3px; align-self: stretch; height: 23px; }
.card-head input { margin: 0 0 0 1px; }
.photo { width: 76px; height: 101px; margin: 5px 0 12px 2px; }
.photo-text { font: italic 17px "Liberation Serif", serif; fill: #3aa5dc; }
.enrolled { display: flex; align-items: center; gap: 5px; margin-top: 2px; }
.enrolled i { width: 13px; height: 13px; border-radius: 50%; background: radial-gradient(#3540e0, #0b0b8c); font: bold 10px/13px "Liberation Sans", sans-serif; text-align: center; }
```
